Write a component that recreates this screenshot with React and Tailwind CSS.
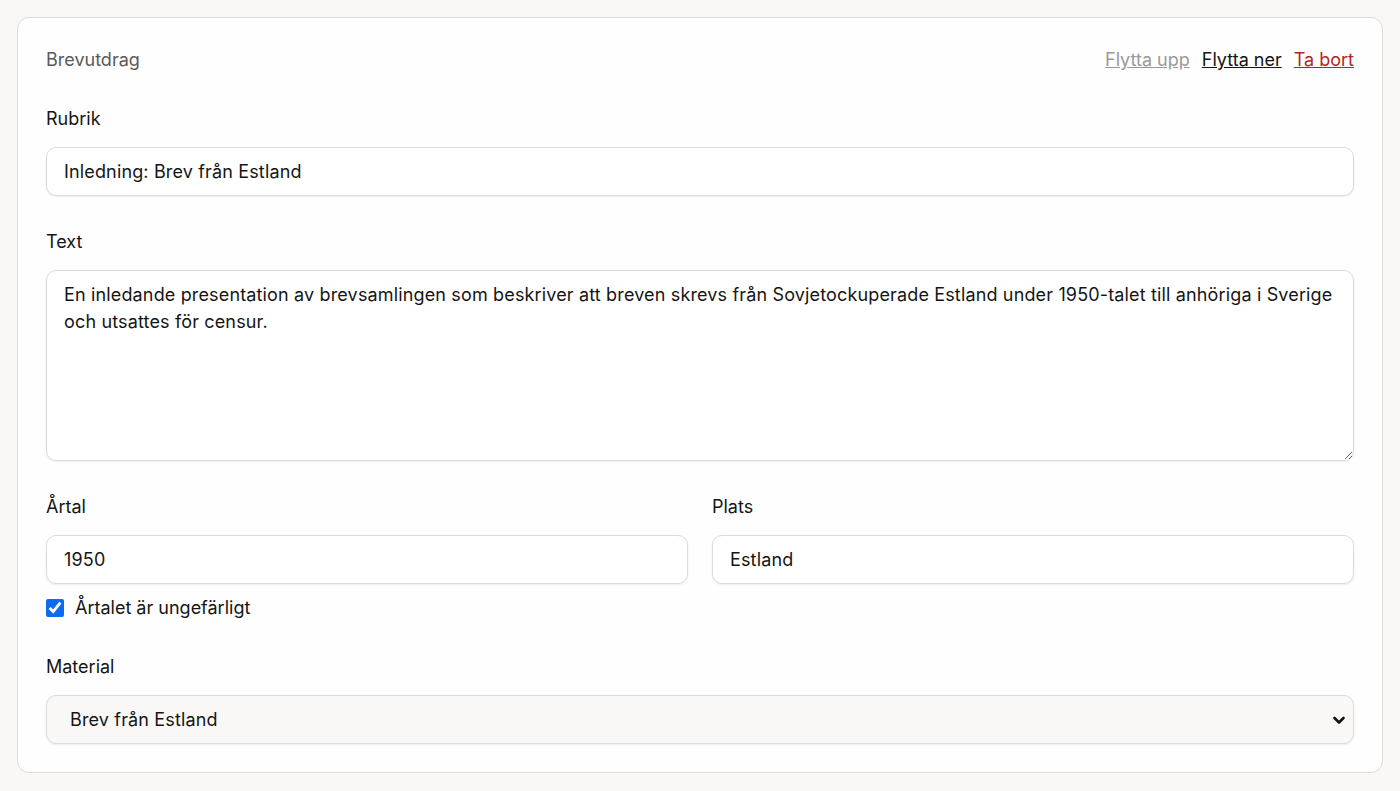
import { useState } from "react";

const font = { fontFamily: "Inter, 'Noto Sans', sans-serif" };

function Field({ label, children }) {
  return (
    <div>
      <label className="block text-[18px] leading-[27px] text-[#151515] mb-[15px]">{label}</label>
      {children}
    </div>
  );
}

const inputCls =
  "block w-full rounded-[10px] border border-[#dcdcdc] bg-white px-[17px] py-[10px] text-[18px] leading-[27px] tracking-[0.15px] text-[#151515] shadow-[0_1px_2px_rgba(0,0,0,0.08)] outline-none";

export default function App() {
  const [rubrik, setRubrik] = useState("Inledning: Brev från Estland");
  const [text, setText] = useState(
    "En inledande presentation av brevsamlingen som beskriver att breven skrevs från Sovjetockuperade Estland under 1950-talet till anhöriga i Sverige och utsattes för censur."
  );
  const [year, setYear] = useState("1950");
  const [place, setPlace] = useState("Estland");
  const [approx, setApprox] = useState(true);

  return (
    <div className="min-h-[791px] bg-[#f9f8f6] p-[17px]" style={font}>
      <div className="rounded-[12px] border border-[#dddcda] bg-[#fefefe] p-7">
        <div className="flex items-center justify-between mb-8">
          <h2 className="text-[18px] leading-[25px] text-[#5a5a5a]">Brevutdrag</h2>
          <div className="flex gap-3 text-[18px] leading-[27px]">
            <button className="underline text-[#9a9a9a]">Flytta upp</button>
            <button className="underline text-[#151515]">Flytta ner</button>
            <button className="underline text-[#b3261e]">Ta bort</button>
          </div>
        </div>

        <div className="space-y-8">
          <Field label="Rubrik">
            <input className={inputCls} value={rubrik} onChange={e => setRubrik(e.target.value)} />
          </Field>

          <Field label="Text">
            <textarea
              className={inputCls + " h-[191px]"}
              value={text}
              onChange={e => setText(e.target.value)}
            />
          </Field>

          <div>
            <div className="grid grid-cols-2 gap-6">
              <Field label="Årtal">
                <input className={inputCls} value={year} onChange={e => setYear(e.target.value)} />
              </Field>
              <Field label="Plats">
                <input className={inputCls} value={place} onChange={e => setPlace(e.target.value)} />
              </Field>
            </div>
            <label className="mt-[10px] flex items-center gap-[11px] text-[18px] leading-[27px] text-[#151515]">
              <input
                type="checkbox"
                checked={approx}
                onChange={e => setApprox(e.target.checked)}
                className="h-[18px] w-[18px] accent-[#0b6bf2]"
              />
              Årtalet är ungefärligt
            </label>
          </div>

          <Field label="Material">
            <div className="relative">
              <select
                className="block w-full appearance-none rounded-[10px] border border-[#dcdcdc] bg-[#f9f8f6] px-[23px] py-[10px] text-[18px] leading-[27px] tracking-[0.15px] text-[#151515] shadow-[0_1px_2px_rgba(0,0,0,0.08)] outline-none"
                defaultValue="estland"
              >
                <option value="estland">Brev från Estland</option>
              </select>
              <svg
                className="pointer-events-none absolute right-[8px] top-1/2 -translate-y-1/2"
                width="14"
                height="14"
                viewBox="0 0 14 14"
              >
                <path d="M2.5 5 L7 9.5 L11.5 5" fill="none" stroke="#111" strokeWidth="2.6" strokeLinecap="round" strokeLinejoin="round" />
              </svg>
            </div>
          </Field>
        </div>
      </div>
    </div>
  );
}
